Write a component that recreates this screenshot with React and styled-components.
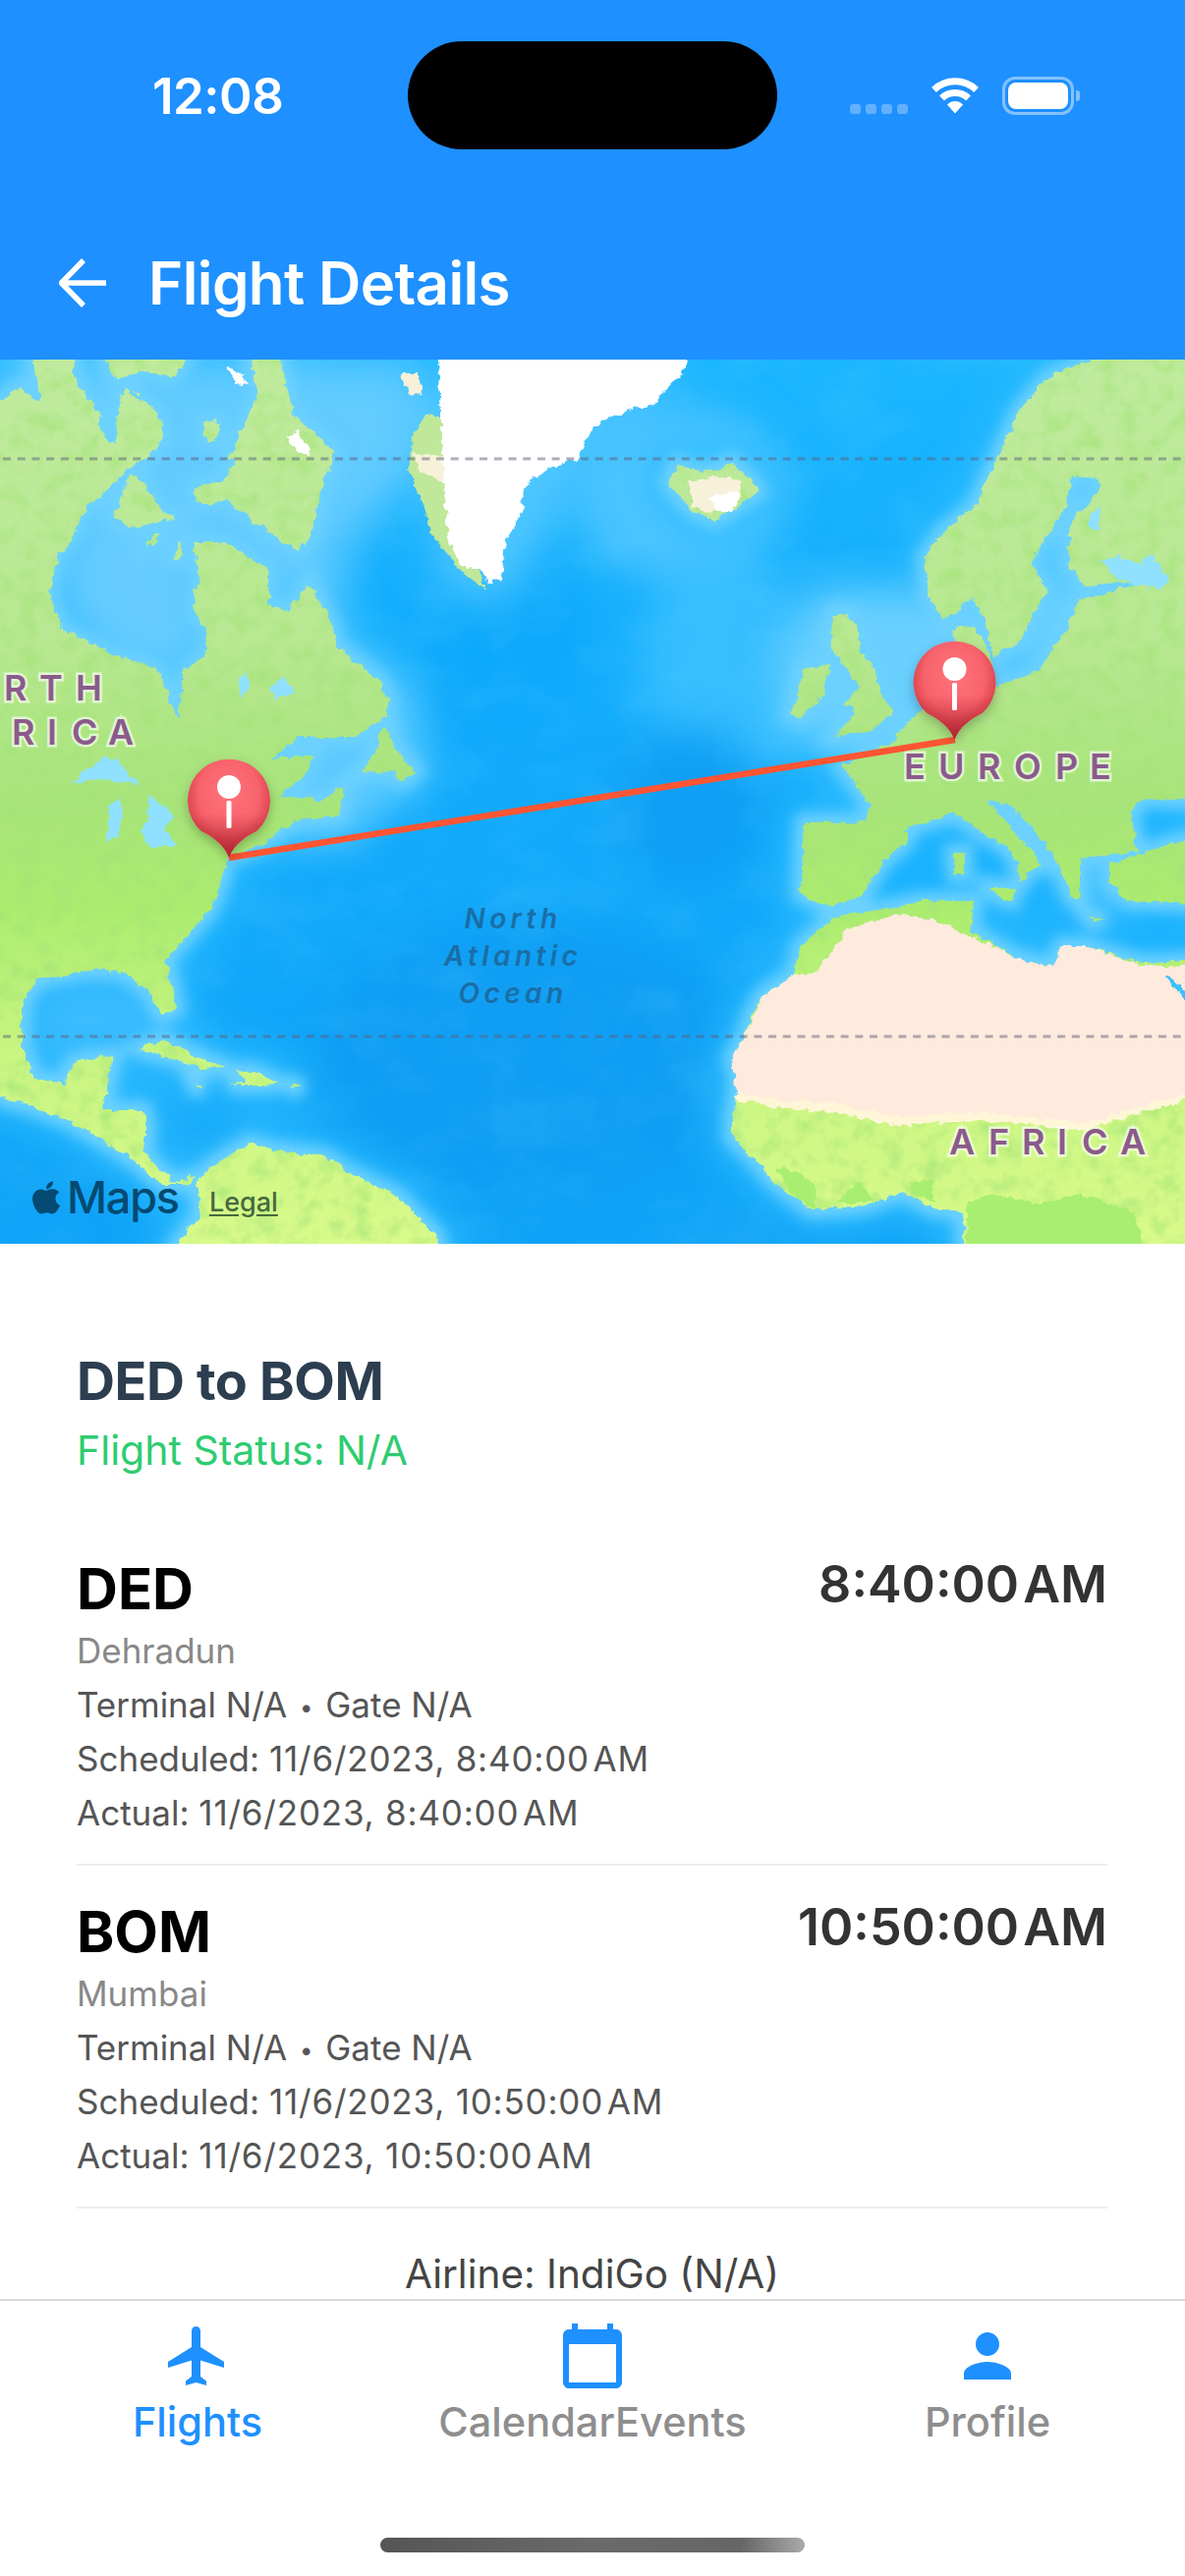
import React from 'react'
import styled, { createGlobalStyle } from 'styled-components'
import { FaApple } from 'react-icons/fa'
import { MdFlight, MdCalendarToday, MdPerson } from 'react-icons/md'

const BLUE = '#1E90FF'
const FONT = 'Inter, "Noto Sans", "Liberation Sans", sans-serif'

const Global = createGlobalStyle`
  html, body { margin: 0; padding: 0; background: #fff; }
  body { font-family: ${FONT}; overflow: hidden; }
`

const Screen = styled.div`
  width: 1206px;
  height: 2622px;
  display: flex;
  flex-direction: column;
  overflow: hidden;
  background: #fff;
`

/* ---------- header ---------- */
const Header = styled.header`
  background: ${BLUE};
  height: 366px;
  flex: none;
  color: #fff;
  padding-top: 42px;
  box-sizing: border-box;
`
const StatusBar = styled.div`
  display: grid;
  grid-template-columns: 415px 376px 415px;
  height: 110px;
  align-items: center;
`
const Clock = styled.div`
  padding-left: 155px;
  font-size: 51px;
  font-weight: 600;
  letter-spacing: -0.5px;
`
const Island = styled.div`
  height: 110px;
  background: #000;
  border-radius: 55px;
`
const StatusIcons = styled.div`
  display: flex;
  align-items: center;
  gap: 23px;
  padding-left: 74px;
`
const Signal = styled.div`
  display: flex;
  gap: 5px;
  align-self: flex-end;
  margin-bottom: 1px;
`
const SignalDot = styled.span`
  width: 11px;
  height: 10px;
  border-radius: 3px;
  background: rgba(255, 255, 255, 0.3);
`
const Battery = styled.div`
  position: relative;
  width: 73px;
  height: 39px;
  box-sizing: border-box;
  border: 3px solid rgba(255, 255, 255, 0.45);
  border-radius: 13px;
  padding: 3px;
  &::after {
    content: '';
    position: absolute;
    right: -9px;
    top: 11px;
    width: 4px;
    height: 11px;
    border-radius: 0 3px 3px 0;
    background: rgba(255, 255, 255, 0.45);
  }
`
const BatteryFill = styled.div`
  height: 100%;
  background: #fff;
  border-radius: 8px;
`
const NavBar = styled.div`
  display: flex;
  align-items: center;
  gap: 43px;
  height: 92px;
  margin-top: 90px;
  padding-left: 60px;
`
const Title = styled.h1`
  margin: 0;
  font-size: 60px;
  font-weight: 600;
  letter-spacing: -0.6px;
`

/* ---------- map ---------- */
const MapFrame = styled.div`
  position: relative;
  flex: none;
  height: 900px;
  overflow: hidden;
`
const MapSvg = styled.svg`
  display: block;
  width: 1206px;
  height: 900px;
`
const RegionLabel = styled.text`
  font-family: ${FONT};
  font-size: 36px;
  font-weight: 600;
  fill: #8b5a8c;
  stroke: rgba(255, 255, 255, 0.65);
  stroke-width: 5px;
  paint-order: stroke;
`
const OceanLabel = styled.text`
  font-family: ${FONT};
  font-size: 28px;
  font-weight: 600;
  font-style: italic;
  letter-spacing: 4.4px;
  fill: #1a6ea6;
  text-anchor: middle;
`
const Attribution = styled.div`
  position: absolute;
  left: 28px;
  bottom: 20px;
  display: flex;
  align-items: center;
  color: #054a72;
`
const MapsWord = styled.span`
  font-size: 45px;
  font-weight: 500;
  letter-spacing: -1.2px;
  margin-left: 2px;
`
const Legal = styled.span`
  margin-left: 31px;
  margin-top: 9px;
  font-size: 27px;
  font-weight: 500;
  color: #46693f;
  text-decoration: underline;
  text-underline-offset: 3px;
`

/* ---------- details ---------- */
const Details = styled.main`
  flex: 1;
  min-height: 0;
  overflow: hidden;
  padding: 109px 79px 0 78px;
`
const Route = styled.h2`
  margin: 0;
  font-size: 54px;
  line-height: 62px;
  font-weight: 700;
  color: #2c3e50;
  letter-spacing: -0.4px;
`
const FlightStatus = styled.div`
  margin-top: 12px;
  font-size: 41px;
  line-height: 54px;
  color: #2ecc71;
`
const Legs = styled.div`
  margin-top: 47px;
`
const Leg = styled.section`
  padding: 34px 0 24px;
  border-bottom: 2px solid #eeeeee;
`
const LegTop = styled.div`
  display: flex;
  justify-content: space-between;
  align-items: flex-start;
`
const Code = styled.div`
  font-size: 58px;
  line-height: 66px;
  font-weight: 700;
  color: #000;
`
const Time = styled.div`
  font-size: 52px;
  line-height: 58px;
  font-weight: 600;
  color: #333;
  word-spacing: -9px;
`
const City = styled.div`
  margin-top: 3px;
  font-size: 35px;
  line-height: 55px;
  color: #888;
`
const Line = styled.div`
  height: 55px;
  font-size: 35px;
  line-height: 55px;
  color: #555;
`
const Dot = styled.span`
  font-size: 24px;
  line-height: 0;
  margin: 0 3px;
  vertical-align: 2px;
`
const Stamp = styled.span`
  letter-spacing: 0.8px;
`
const StampTime = styled.span`
  word-spacing: -7px;
`
const Airline = styled.div`
  margin-top: 42px;
  font-size: 40.5px;
  line-height: 50px;
  color: #444;
  text-align: center;
`

/* ---------- tabs ---------- */
const TabBar = styled.nav`
  flex: none;
  height: 282px;
  box-sizing: border-box;
  border-top: 2px solid #d9d9d9;
  padding-top: 20px;
  background: #fff;
`
const Tabs = styled.div`
  display: grid;
  grid-template-columns: repeat(3, 1fr);
`
const Tab = styled.div`
  display: flex;
  flex-direction: column;
  align-items: center;
  color: ${BLUE};
`
const TabLabel = styled.span`
  margin-top: 6px;
  font-size: 41.5px;
  line-height: 50px;
  font-weight: 500;
  color: ${(p) => (p.$active ? BLUE : '#8e8e8f')};
`
const HomeIndicator = styled.div`
  width: 432px;
  height: 15px;
  margin: 93px auto 0;
  border-radius: 8px;
  background: linear-gradient(90deg, #555 0%, #6a6a6a 50%, #666 85%, #aaa 100%);
`

/* ---------- map geometry, full page coords ---------- */
// shapes run past the frame so the coast wobble leaves no gap at the edges
const LAND = [
  // north america
  'M-20 420 L20 395 L40 410 L35 375 L30 346 L75 346 L75 385 L100 420 L105 445 L118 450 L120 405 L130 395 L160 420 L168 445 L150 465 L130 478 L118 490 L85 520 L75 545 L60 565 L50 600 L55 620 L65 640 L77 647 L115 667 L161 680 L181 733 L188 683 L208 667 L212 647 L196 617 L202 587 L196 550 L231 553 L273 580 L273 613 L292 623 L315 593 L338 637 L342 657 L385 693 L396 713 L392 730 L362 750 L304 750 L277 773 L300 770 L320 768 L310 790 L285 810 L330 815 L350 800 L345 830 L300 835 L265 860 L231 873 L223 903 L213 927 L169 977 L179 1027 L165 1033 L150 1007 L127 990 L92 987 L38 997 L23 1020 L23 1067 L35 1097 L65 1103 L73 1083 L88 1077 L115 1075 L108 1113 L104 1130 L146 1130 L150 1150 L146 1173 L161 1190 L177 1203 L200 1197 L190 1205 L165 1205 L131 1177 L69 1140 L35 1127 L0 1117 L-20 1110 Z',
  // arctic islands
  'M100 346 L190 346 L190 366 L175 385 L150 378 L115 385 Z',
  'M250 346 L285 346 L285 366 L295 410 L300 425 L320 440 L340 460 L335 480 L327 497 L318 540 L304 560 L285 550 L258 530 L231 510 L200 513 L198 495 L225 490 L240 470 L232 465 L250 430 L262 400 Z',
  'M207 430 L220 427 L223 445 L210 450 Z',
  'M131 483 L145 490 L165 520 L177 527 L160 532 L133 537 L115 527 Z',
  'M150 552 L162 542 L160 552 L148 556 Z',
  'M180 555 L186 552 L184 568 L178 568 Z',
  // newfoundland
  'M385 745 L395 737 L400 760 L423 785 L410 795 L395 785 L367 787 L385 760 Z',
  // caribbean
  'M142 1067 L165 1058 L200 1075 L230 1087 L205 1088 L180 1078 L150 1070 Z',
  'M242 1090 L262 1092 L285 1103 L262 1104 L232 1104 L250 1100 Z',
  'M198 1103 L208 1105 L200 1107 Z',
  'M296 1104 L308 1105 L300 1108 Z',
  // south america
  'M170 1290 L181 1266 L204 1237 L200 1203 L215 1187 L254 1163 L277 1170 L331 1177 L354 1193 L404 1217 L446 1260 L448 1290 Z',
  // iceland
  'M680 490 L690 472 L705 478 L722 480 L745 470 L765 490 L772 500 L750 515 L728 530 L705 520 L690 505 Z',
  // britain, ireland
  'M850 625 L862 625 L875 640 L875 665 L890 680 L898 710 L910 725 L885 745 L850 750 L870 725 L860 715 L875 700 L850 665 L845 650 Z',
  'M818 680 L845 677 L840 705 L815 730 L805 727 L812 705 Z',
  // eurasia
  'M1111 346 L1226 346 L1226 815 L1206 815 L1165 812 L1150 825 L1157 867 L1099 873 L1099 913 L1091 913 L1068 863 L1030 820 L1005 815 L1061 880 L1047 887 L1038 900 L1036 880 L1026 863 L988 840 L972 828 L922 843 L922 857 L899 877 L876 913 L841 923 L815 910 L818 837 L880 837 L886 820 L857 780 L907 757 L938 720 L975 705 L1011 700 L1057 683 L1082 645 L1100 610 L1165 592 L1103 597 L1088 577 L1088 537 L1118 500 L1118 487 L1091 483 L1084 517 L1049 570 L1065 600 L1038 653 L1011 667 L1003 633 L991 608 L961 630 L945 607 L941 567 L961 540 L991 517 L1018 460 L1038 417 L1068 383 L1111 366 Z',
  'M968 640 L990 638 L1005 655 L1012 690 L985 705 L975 670 Z',
  'M1130 880 L1195 857 L1226 853 L1226 920 L1149 917 L1130 900 Z',
  // med islands
  'M970 868 L982 868 L980 890 L972 890 Z',
  'M1007 902 L1032 905 L1030 917 L1015 912 Z',
  'M1108 932 L1125 936 L1112 938 Z',
  // africa
  'M849 933 L815 963 L807 993 L776 1013 L765 1033 L757 1057 L745 1077 L751 1097 L749 1117 L745 1140 L745 1157 L768 1180 L788 1203 L826 1232 L880 1227 L918 1213 L949 1230 L980 1233 L982 1290 L1226 1290 L1226 978 L1161 980 L1103 963 L1080 963 L1072 985 L1034 975 L988 948 L991 917 L938 917 L888 927 Z',
]

const SHALLOWS = [
  ['M50 600 L85 500 L200 490 L215 690 L110 680 Z', '#66ccff'],
  ['M0 366 L430 366 L425 480 L345 560 L345 650 L200 560 L100 500 L0 500 Z', '#62cbff'],
  ['M345 650 L420 700 L430 790 L350 860 L270 850 L290 760 Z', '#5ccaff'],
  ['M830 600 L1000 600 L1015 720 L890 770 L790 745 L795 650 Z', '#6ad0ff'],
  ['M1040 600 L1170 580 L1120 660 L1060 690 L1020 690 Z', '#6ad0ff'],
  ['M1085 480 L1125 480 L1095 590 L1050 575 Z', '#6ad0ff'],
  ['M35 1000 L160 1000 L172 1060 L110 1070 L40 1090 Z', '#3dbdff'],
  ['M885 860 L1000 840 L1090 930 L1206 930 L1206 975 L1100 960 L990 910 L880 920 Z', '#19b2ff'],
  ['M1098 875 L1150 885 L1140 925 L1100 925 Z', '#5ccaff'],
  ['M1150 815 L1206 815 L1206 855 L1160 865 Z', '#19b2ff'],
  ['M420 400 L450 600 L510 620 L600 470 L690 366 Z', '#4fc6ff'],
]

const SAHARA =
  'M865 943 L922 930 L949 937 L988 953 L1034 975 L1072 985 L1080 963 L1103 963 L1161 982 L1226 985 L1226 1111 L1103 1147 L1000 1135 L911 1140 L853 1127 L795 1123 L749 1115 L745 1077 L757 1057 L776 1013 L807 993 L830 990 Z'

const FOREST = [
  'M982 1290 L985 1225 L1010 1215 L1060 1225 L1100 1215 L1155 1235 L1170 1290 Z',
  'M788 1190 L800 1188 L830 1205 L830 1232 L810 1220 Z',
  'M850 1225 L875 1202 L890 1222 Z',
  'M925 1205 L950 1200 L952 1225 L930 1215 Z',
]

const LAKES = [
  'M73 797 L105 770 L118 772 L142 800 L128 797 L100 792 Z',
  'M112 818 L125 812 L122 850 L108 858 Z',
  'M150 808 L178 830 L165 845 L182 860 L152 862 L142 845 L152 830 Z',
  'M1118 570 L1140 565 L1190 590 L1180 600 L1140 590 Z',
  'M1160 570 L1172 565 L1190 590 L1175 595 Z',
  'M275 700 L290 690 L300 705 L280 712 Z',
  'M242 690 L250 685 L254 700 L245 712 Z',
  'M1110 520 L1120 515 L1118 540 L1108 538 Z',
]

const PIN_PATH = 'M0 0 C-5 -14 -18 -22 -28 -27 A42 42 0 1 1 28 -27 C18 -22 5 -14 0 0 Z'

const Pin = ({ x, y }) => (
  <g transform={`translate(${x} ${y})`} filter="url(#pinShadow)">
    <path d={PIN_PATH} fill="url(#pinBody)" />
    <path d={PIN_PATH} fill="url(#pinShade)" />
    <circle cx="0" cy="-72" r="12" fill="#fff" />
    <rect x="-2.5" y="-58" width="5" height="28" rx="1.5" fill="#fff" />
  </g>
)

const WorldMap = () => (
  <MapSvg viewBox="0 366 1206 900">
    <defs>
      <linearGradient id="ocean" x1="0" y1="0" x2="0" y2="1">
        <stop offset="0" stopColor="#1ab6ff" />
        <stop offset="0.45" stopColor="#12abfc" />
        <stop offset="1" stopColor="#10a3f7" />
      </linearGradient>
      <linearGradient id="land" gradientUnits="userSpaceOnUse" x1="0" y1="366" x2="0" y2="1266">
        <stop offset="0" stopColor="#c0eb9e" />
        <stop offset="0.32" stopColor="#b8e891" />
        <stop offset="0.5" stopColor="#a8e47a" />
        <stop offset="0.62" stopColor="#abec6e" />
        <stop offset="0.78" stopColor="#c8f582" />
        <stop offset="1" stopColor="#d8fa8a" />
      </linearGradient>
      <radialGradient id="pinBody" cx="0.5" cy="0.36" r="0.56">
        <stop offset="0" stopColor="#ff727b" />
        <stop offset="0.65" stopColor="#f8636c" />
        <stop offset="1" stopColor="#d63c48" />
      </radialGradient>
      <linearGradient id="pinShade" x1="0" y1="0" x2="0" y2="1">
        <stop offset="0.55" stopColor="#a8202c" stopOpacity="0" />
        <stop offset="1" stopColor="#a8202c" stopOpacity="0.8" />
      </linearGradient>
      <filter id="blurWide" filterUnits="userSpaceOnUse" x="-100" y="266" width="1406" height="1100" colorInterpolationFilters="sRGB">
        <feGaussianBlur stdDeviation="22" />
      </filter>
      <filter id="blurTight" filterUnits="userSpaceOnUse" x="-100" y="266" width="1406" height="1100" colorInterpolationFilters="sRGB">
        <feGaussianBlur stdDeviation="7" />
      </filter>
      <filter id="ripple" filterUnits="userSpaceOnUse" x="0" y="366" width="1206" height="900" colorInterpolationFilters="sRGB">
        <feTurbulence type="fractalNoise" baseFrequency="0.012 0.018" numOctaves="4" seed="9" />
        <feColorMatrix values="0 0 0 0 0.42  0 0 0 0 0.82  0 0 0 0 1  2.2 0 0 0 -1" />
      </filter>
      <filter id="jagged" filterUnits="userSpaceOnUse" x="-20" y="346" width="1246" height="940" colorInterpolationFilters="sRGB">
        <feTurbulence type="fractalNoise" baseFrequency="0.11" numOctaves="3" seed="4" result="warp" />
        <feDisplacementMap in="SourceGraphic" in2="warp" scale="9" xChannelSelector="R" yChannelSelector="G" />
      </filter>
      <filter id="landMottle" filterUnits="userSpaceOnUse" x="-20" y="346" width="1246" height="940" colorInterpolationFilters="sRGB">
        <feTurbulence type="fractalNoise" baseFrequency="0.11" numOctaves="3" seed="4" result="warp" />
        <feDisplacementMap in="SourceGraphic" in2="warp" scale="9" xChannelSelector="R" yChannelSelector="G" result="shape" />
        <feTurbulence type="fractalNoise" baseFrequency="0.05" numOctaves="3" seed="11" result="noise" />
        <feColorMatrix in="noise" values="0 0 0 0 0.64  0 0 0 0 0.89  0 0 0 0 0.47  1.6 0 0 0 -0.72" result="tint" />
        <feComposite in="tint" in2="shape" operator="in" result="patch" />
        <feMerge>
          <feMergeNode in="shape" />
          <feMergeNode in="patch" />
        </feMerge>
      </filter>
      <filter id="pinShadow" x="-40%" y="-20%" width="180%" height="150%">
        <feDropShadow dx="0" dy="5" stdDeviation="6" floodColor="#000" floodOpacity="0.25" />
      </filter>
    </defs>

    <rect x="0" y="366" width="1206" height="900" fill="url(#ocean)" />
    <g filter="url(#blurWide)">
      <ellipse cx="690" cy="500" rx="110" ry="90" fill="#4cc5ff" />
      <ellipse cx="740" cy="690" rx="90" ry="120" fill="#36beff" />
      <ellipse cx="540" cy="1080" rx="220" ry="140" fill="#0f9ef3" />
      <ellipse cx="700" cy="820" rx="80" ry="80" fill="#0f9ff4" />
      <ellipse cx="520" cy="650" rx="70" ry="80" fill="#0ba8fb" />
    </g>
    <rect x="0" y="366" width="1206" height="900" filter="url(#ripple)" opacity="0.18" />

    <g filter="url(#blurWide)">
      {LAND.map((d) => (
        <path key={d} d={d} fill="#2cbcff" stroke="#2cbcff" strokeWidth="40" />
      ))}
    </g>
    <g filter="url(#blurWide)">
      {SHALLOWS.map(([d, color]) => (
        <path key={d} d={d} fill={color} />
      ))}
    </g>
    <g filter="url(#blurTight)">
      {LAND.map((d) => (
        <path key={d} d={d} fill="#6dd1ff" stroke="#6dd1ff" strokeWidth="18" />
      ))}
    </g>

    <g filter="url(#landMottle)">
      {LAND.map((d) => (
        <path key={d} d={d} fill="url(#land)" />
      ))}
    </g>
    <g filter="url(#jagged)">
      <path d="M440 420 L420 440 L416 480 L430 510 L440 545 L470 582 L494 600 L470 540 L455 500 L455 430 Z" fill="#bfe89a" />
      <path
        d="M445 346 L699 346 L699 366 L695 380 L665 410 L620 425 L603 435 L588 467 L558 477 L531 497 L533 517 L515 550 L511 590 L496 593 L490 580 L469 575 L456 550 L452 500 L449 470 L449 420 Z"
        fill="#fff"
      />
      <path d="M420 462 L450 464 L452 490 L428 482 Z" fill="#f6f1d8" />
      <path d="M408 380 L425 380 L430 400 L415 402 Z" fill="#f6f1d8" />
      <path d="M232 372 L245 380 L252 392 L240 390 Z" fill="#fff" />
      <path d="M292 445 L305 440 L316 462 L305 462 Z" fill="#fff" />
      <path d="M700 490 L730 485 L755 490 L752 508 L722 522 L705 515 Z" fill="#f7f1d9" />
      <path d="M723 505 L752 500 L745 520 L730 520 Z" fill="#fff" />
      <path d={SAHARA} fill="#ffebdd" />
      <path d="M749 1112 L795 1120 L853 1124 L911 1137 L1000 1132 L1103 1144 L1226 1108 L1226 1114 L1103 1150 L1000 1140 L911 1146 L853 1132 L795 1128 L749 1120 Z" fill="#fff6d8" />
      {FOREST.map((d) => (
        <path key={d} d={d} fill="#a8ee70" />
      ))}
      {LAKES.map((d) => (
        <path key={d} d={d} fill="#8fe1ff" />
      ))}
      <path d="M1186 993 L1194 995 L1226 1030 L1226 1040 Z" fill="#3cbfff" />
    </g>

    <path d="M3 467 H1206" stroke="#5d5d78" strokeOpacity="0.5" strokeWidth="3" strokeDasharray="8 6.7" fill="none" />
    <path d="M3 1055 H1206" stroke="#5d5d78" strokeOpacity="0.5" strokeWidth="3" strokeDasharray="8 6.7" fill="none" />

    <RegionLabel x="4 40 77" y="713">RTH</RegionLabel>
    <RegionLabel x="12 48 73 110" y="758">RICA</RegionLabel>
    <RegionLabel x="920 955 995 1032 1074 1109" y="793">EUROPE</RegionLabel>
    <RegionLabel x="966 1006 1040 1076 1101 1140" y="1175">AFRICA</RegionLabel>

    <OceanLabel x="522" y="945">North</OceanLabel>
    <OceanLabel x="522" y="983">Atlantic</OceanLabel>
    <OceanLabel x="522" y="1021">Ocean</OceanLabel>

    <path d="M233 873 L972 753" stroke="#ff5533" strokeWidth="6.5" fill="none" />
    <Pin x={233} y={873} />
    <Pin x={971.5} y={753} />
  </MapSvg>
)

const WifiIcon = () => (
  <svg width="50" height="38" viewBox="0 0 50 38">
    <path d="M3.5 13.5 A31 31 0 0 1 46.5 13.5" fill="none" stroke="#fff" strokeWidth="7" />
    <path d="M11.5 22 A19.5 19.5 0 0 1 38.5 22" fill="none" stroke="#fff" strokeWidth="7" />
    <path d="M17 28.5 A11 11 0 0 1 33 28.5 L25 37.5 Z" fill="#fff" />
  </svg>
)

const BackArrow = () => (
  <svg width="48" height="50" viewBox="0 0 48 50">
    <path d="M48 25 H3 M25 2 L2.5 25 L25 48" fill="none" stroke="#fff" strokeWidth="5.5" />
  </svg>
)

const LEGS = [
  { code: 'DED', city: 'Dehradun', time: '8:40:00 AM' },
  { code: 'BOM', city: 'Mumbai', time: '10:50:00 AM' },
]

const TABS = [
  { label: 'Flights', Icon: MdFlight, active: true },
  { label: 'CalendarEvents', Icon: MdCalendarToday },
  { label: 'Profile', Icon: MdPerson },
]

const DateTime = ({ time }) => (
  <Stamp>
    11/6/2023, <StampTime>{time}</StampTime>
  </Stamp>
)

export default function App() {
  return (
    <Screen>
      <Global />
      <Header>
        <StatusBar>
          <Clock>12:08</Clock>
          <Island />
          <StatusIcons>
            <Signal>
              <SignalDot />
              <SignalDot />
              <SignalDot />
              <SignalDot />
            </Signal>
            <WifiIcon />
            <Battery>
              <BatteryFill />
            </Battery>
          </StatusIcons>
        </StatusBar>
        <NavBar>
          <BackArrow />
          <Title>Flight Details</Title>
        </NavBar>
      </Header>

      <MapFrame>
        <WorldMap />
        <Attribution>
          <FaApple size={38} />
          <MapsWord>Maps</MapsWord>
          <Legal>Legal</Legal>
        </Attribution>
      </MapFrame>

      <Details>
        <Route>DED to BOM</Route>
        <FlightStatus>Flight Status: N/A</FlightStatus>
        <Legs>
          {LEGS.map((leg) => (
            <Leg key={leg.code}>
              <LegTop>
                <Code>{leg.code}</Code>
                <Time>{leg.time}</Time>
              </LegTop>
              <City>{leg.city}</City>
              <Line>
                Terminal N/A <Dot>•</Dot> Gate N/A
              </Line>
              <Line>
                Scheduled: <DateTime time={leg.time} />
              </Line>
              <Line>
                Actual: <DateTime time={leg.time} />
              </Line>
            </Leg>
          ))}
        </Legs>
        <Airline>Airline: IndiGo (N/A)</Airline>
      </Details>

      <TabBar>
        <Tabs>
          {TABS.map(({ label, Icon, active }) => (
            <Tab key={label}>
              <Icon size={72} />
              <TabLabel $active={active}>{label}</TabLabel>
            </Tab>
          ))}
        </Tabs>
        <HomeIndicator />
      </TabBar>
    </Screen>
  )
}
